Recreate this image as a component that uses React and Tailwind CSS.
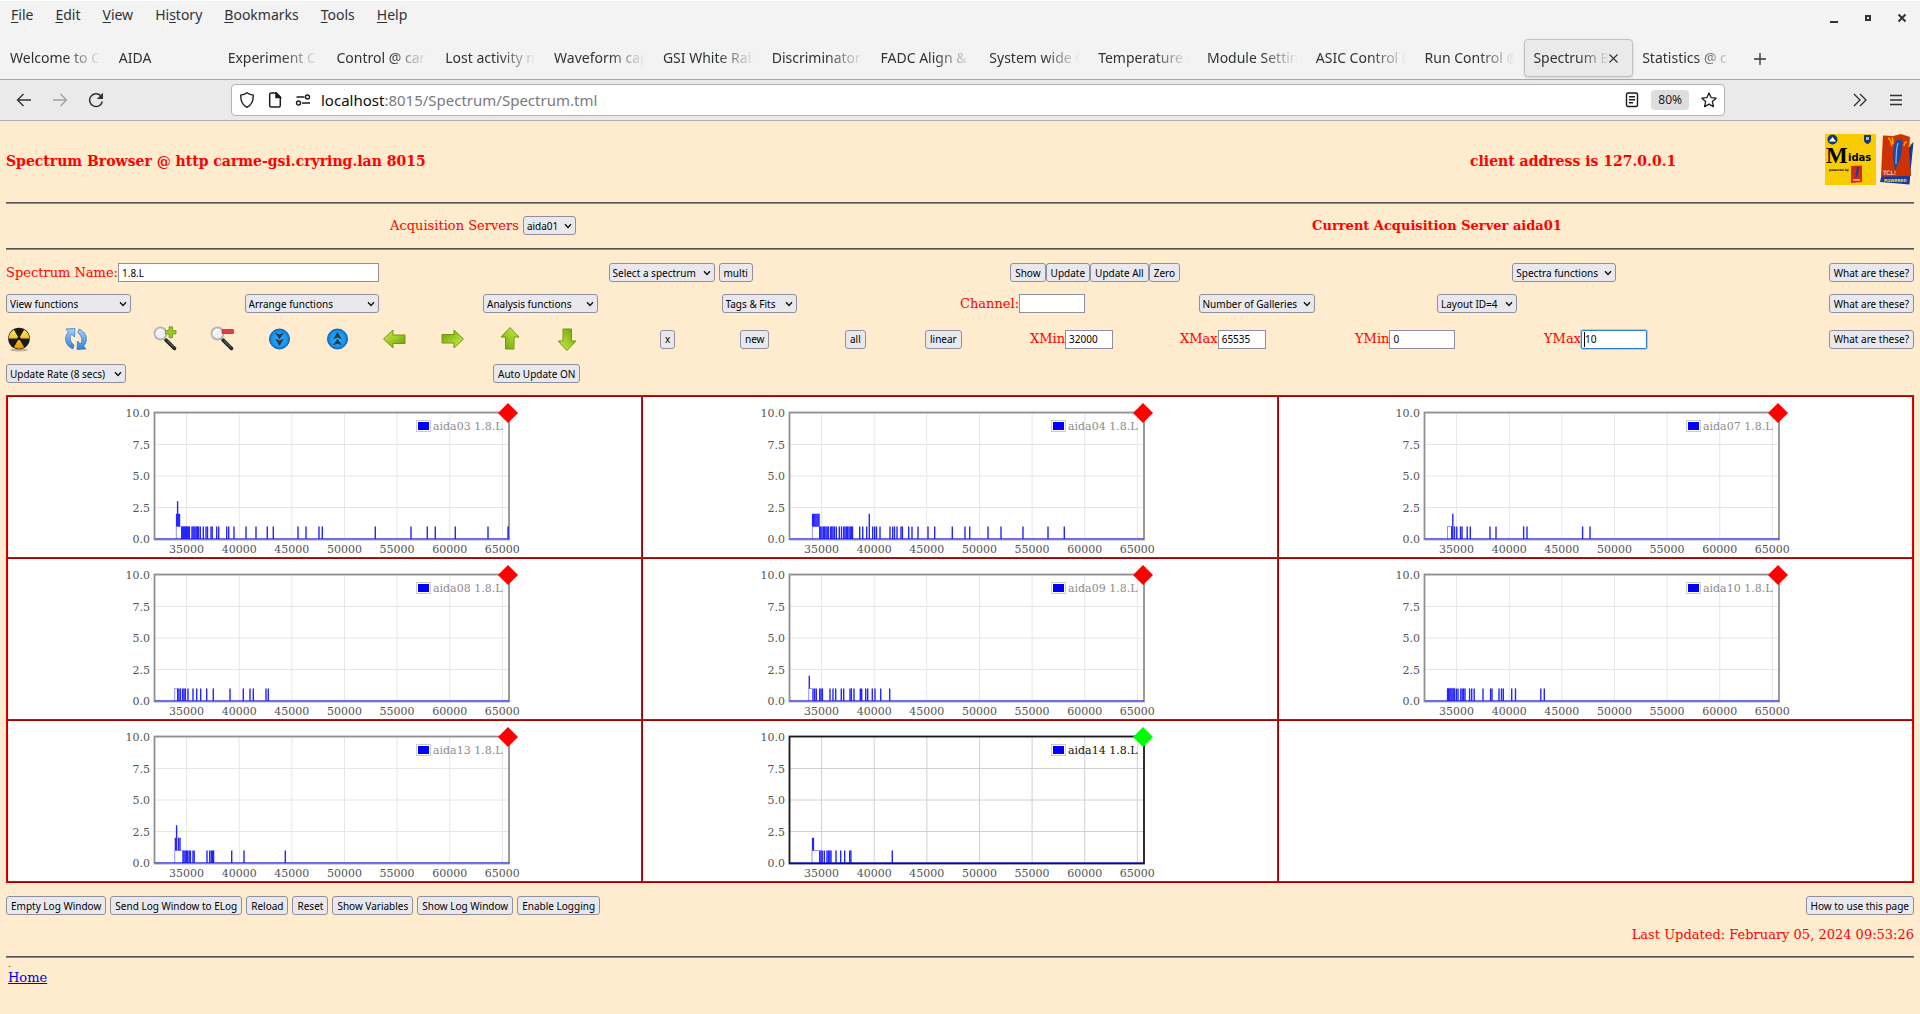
import React from 'react';

const menus = ['File', 'Edit', 'View', 'History', 'Bookmarks', 'Tools', 'Help'];
const menuKeys = { History: 2 };

const tabs = [
    'Welcome to C',
    'AIDA',
    'Experiment C',
    'Control @ car',
    'Lost activity n',
    'Waveform cap',
    'GSI White Rab',
    'Discriminator',
    'FADC Align &',
    'System wide C',
    'Temperature a',
    'Module Settin',
    'ASIC Control @',
    'Run Control @',
    'Spectrum B',
    'Statistics @ c',
];
const activeTab = 14;

// Every gallery: hits are bins with a single count, peaks and tall are [bin, count]
const galleries = [
    {
        name: 'aida03 1.8.L',
        plateau: [21.3, 26.3],
        peaks: [[21.6, 2], [22.6, 3], [23.6, 2], [24.5, 2]],
        hits: [
            26.7, 27.7, 28.6, 29.6, 30.5, 31.5, 32.4, 33.4, 34.4, 37, 38, 39, 40, 41.2, 42.4, 43.5, 45.3, 48.3, 51,
            52.5, 56, 57.2, 61.7, 63.7, 71.7, 73.7, 79, 91, 101, 112.3, 118.3, 143, 151, 164, 167.3, 220.3, 256,
            272.3, 280.3, 300.3, 333, 353,
        ],
    },
    {
        name: 'aida04 1.8.L',
        plateau: [22.3, 29.3],
        peaks: [[22.6, 2], [23.7, 2], [24.8, 2], [25.9, 2], [27, 2], [28.1, 2], [29, 2]],
        hits: [
            29.7, 30.8, 32, 33.5, 34.6, 36, 37.2, 38.5, 40.7, 41.8, 43, 44.4, 46.3, 49.3, 51.5, 53.7, 55, 56.3, 57.5,
            59, 60.2, 61.3, 62.5, 69.7, 72.7, 76.7, 82.7, 84.7, 86.5, 90, 100, 102.7, 104.5, 107, 111, 112.4, 118.7,
            122, 128, 138, 144.7, 162.3, 175, 179.7, 198, 211, 233, 258, 274.3,
        ],
        tall: [[79.3, 2]],
    },
    {
        name: 'aida07 1.8.L',
        plateau: [22.5, 26.5],
        hits: [26.7, 29.5, 31.8, 35.5, 37, 42.2, 45.3, 65, 71, 98.6, 102, 157.6, 165],
        tall: [[27.8, 2]],
    },
    {
        name: 'aida08 1.8.L',
        plateau: [19.7, 22.3],
        hits: [
            22.7, 23.9, 25.5, 27.7, 29, 30.3, 33, 38, 41.7, 45.7, 51.7, 58.3, 75, 88.3, 95, 98.3, 111, 113.3,
        ],
    },
    {
        name: 'aida09 1.8.L',
        plateau: [18.7, 22.3],
        peaks: [[19.3, 2]],
        hits: [
            23, 24.7, 26.3, 29.7, 31, 32.4, 40, 43, 45.7, 51.3, 53.7, 60, 61.4, 64, 70.3, 71.7, 75.7, 77.7, 82.3, 85,
            90.7, 99.7,
        ],
    },
    {
        name: 'aida10 1.8.L',
        plateau: [22.5, 29.5],
        hits: [
            22.6, 23.7, 24.8, 25.9, 27, 28.2, 29.4, 31.3, 33, 35.8, 37.2, 38.6, 40, 44.6, 46.7, 49.2, 58, 65.6, 67,
            74, 76.5, 78.3, 86.7, 90.5, 115.8, 119.3,
        ],
    },
    {
        name: 'aida13 1.8.L',
        plateau: [19.7, 27.3],
        peaks: [[20.4, 2], [21.6, 3], [23.6, 2], [25, 2]],
        hits: [
            28, 29, 30.2, 31.4, 32.7, 34.2, 35.4, 38, 39.2, 52, 54.7, 56.3, 57.5, 58.6, 76.7, 89, 130.3,
        ],
    },
    {
        name: 'aida14 1.8.L',
        active: true,
        plateau: [22, 29],
        peaks: [[22.6, 2], [23.4, 2]],
        hits: [29.7, 31, 32.2, 34.3, 37, 38.4, 39.8, 41, 46, 50.7, 54.7, 59.7, 60.9, 102.3],
    },
];

const field =
    'h-[19px] border border-[#8f8f9d] bg-white pl-[3px] font-[Noto_Sans,sans-serif] text-[10px] text-black outline-none';

const Button = ({ children }) => (
    <button
        type="button"
        className="h-[19px] rounded-[3px] border border-[#8f8f9d] bg-[#e9e9ed] px-1 font-[Noto_Sans,sans-serif] text-[10px] leading-4 whitespace-nowrap text-black">
        {children}
    </button>
);

const Select = ({ label, className, id }) => (
    <span className={`relative inline-block ${className}`}>
        <select
            id={id}
            aria-label={id ? undefined : label}
            className="block h-[19px] w-full appearance-none rounded-[3px] border border-[#8f8f9d] bg-[#e9e9ed] pl-[3px] font-[Noto_Sans,sans-serif] text-[10px] leading-4 text-black">
            <option>{label}</option>
        </select>
        <svg
            className="pointer-events-none absolute top-[7px] right-1 h-[6px] w-[8px]"
            viewBox="0 0 8 6"
            fill="none"
            stroke="#111"
            strokeWidth="1.4">
            <path d="M1 1.2 4 4.4 7 1.2" />
        </svg>
    </span>
);

const Help = () => (
    <div className="text-right">
        <Button>What are these?</Button>
    </div>
);

const LabelledInput = ({ id, label, value, className }) => (
    <div className="flex items-center">
        <label htmlFor={id}>{label}</label>
        <input id={id} defaultValue={value} className={`${field} ${className}`} />
    </div>
);

const Rule = ({ className = '' }) => (
    <hr className={`h-[2px] border-t border-b border-t-[#555] border-b-[#8a8a86] ${className}`} />
);

const MenuBar = () => (
    <div className="flex h-[39px] items-start justify-between border-t border-white px-[11px]">
        <div className="flex gap-[22px] pt-[4px] text-[14px] leading-5">
            {menus.map((menu) => {
                const at = menuKeys[menu] || 0;
                return (
                    <button type="button" key={menu}>
                        {menu.slice(0, at)}
                        <span className="underline underline-offset-2">{menu[at]}</span>
                        {menu.slice(at + 1)}
                    </button>
                );
            })}
        </div>
        <div className="flex gap-6 pt-[12px] text-[#2e3436]">
            <button type="button" aria-label="Minimise">
                <svg width="10" height="10" viewBox="0 0 10 10">
                    <path d="M1 8h8v2H1z" fill="currentColor" />
                </svg>
            </button>
            <button type="button" aria-label="Maximise">
                <svg width="10" height="10" viewBox="0 0 10 10">
                    <rect x="3" y="3" width="4" height="4" fill="none" stroke="currentColor" strokeWidth="2" />
                </svg>
            </button>
            <button type="button" aria-label="Close" className="pr-[2px]">
                <svg width="10" height="10" viewBox="0 0 10 10" stroke="currentColor" strokeWidth="2">
                    <path d="m1.5 1.5 7 7m0-7-7 7" />
                </svg>
            </button>
        </div>
    </div>
);

const TabBar = () => (
    <div className="flex h-[41px] items-start border-b border-[#a9a9ab] pl-px text-[14px] leading-5">
        {tabs.map((tab, i) => (
            <div
                key={tab}
                className={
                    i === activeTab
                        ? 'flex h-[38px] min-w-0 flex-1 items-center rounded border border-[#c0c0c0] bg-[#eaeaea] px-2 shadow-sm'
                        : 'flex h-[38px] min-w-0 flex-1 items-center border border-transparent px-2'
                }>
                <span className="min-w-0 flex-1 overflow-hidden whitespace-nowrap [mask-image:linear-gradient(to_right,black_60%,transparent_100%)]">
                    {tab}
                </span>
                {i === activeTab && (
                    <button type="button" aria-label="Close tab" className="pr-[6px]">
                        <svg width="9" height="9" viewBox="0 0 9 9" stroke="#2e3436" strokeWidth="1.1">
                            <path d="m.5.5 8 8m0-8-8 8" />
                        </svg>
                    </button>
                )}
            </div>
        ))}
        <div className="flex h-[39px] w-[178px] items-center pl-3">
            <button type="button" aria-label="New tab">
                <svg width="12" height="12" viewBox="0 0 12 12" stroke="#2e3436" strokeWidth="1.3">
                    <path d="M6 0v12M0 6h12" />
                </svg>
            </button>
        </div>
    </div>
);

const Toolbar = () => (
    <div className="flex h-[41px] items-center border-b border-[#b0b0b0] bg-[#eaeaea] px-4 text-[#2e3436]">
        <div className="flex w-[215px] shrink-0 items-center gap-5">
            <button type="button" aria-label="Back">
                <svg width="16" height="16" viewBox="0 0 16 16" fill="none" stroke="currentColor" strokeWidth="1.4">
                    <path d="M15 8H1.5M7.5 2l-6 6 6 6" />
                </svg>
            </button>
            <button type="button" aria-label="Forward" className="text-[#a2a3a4]">
                <svg width="16" height="16" viewBox="0 0 16 16" fill="none" stroke="currentColor" strokeWidth="1.4">
                    <path d="M1 8h13.5M8.5 2l6 6-6 6" />
                </svg>
            </button>
            <button type="button" aria-label="Reload">
                <svg width="16" height="16" viewBox="0 0 16 16" fill="none" stroke="currentColor" strokeWidth="1.5">
                    <path d="M14.3 9.500A6.400 6.400 0 1 1 12.8 3.8" />
                    <path d="M15 .8v6.200H8.800z" fill="currentColor" stroke="none" />
                </svg>
            </button>
        </div>
        <div className="flex h-8 flex-1 items-center rounded border border-[#b3b3b3] bg-white pr-[7px] pl-[7px] text-[#1c1b22]">
            <svg width="16" height="16" viewBox="0 0 16 16" fill="none" stroke="currentColor" strokeWidth="1.4">
                <path d="M8 .8c2 1.500 4.200 2.200 6.200 2.300.300 5.500-1.400 9.700-6.200 12.200C3.200 12.800 1.500 8.600 1.800 3.100 3.800 3 6 2.300 8 .8z" />
            </svg>
            <svg
                className="ml-3"
                width="16"
                height="16"
                viewBox="0 0 16 16"
                fill="none"
                stroke="currentColor"
                strokeWidth="1.5">
                <path d="M4.200 1h5.100L13.300 5v8.500a1.500 1.500 0 0 1-1.500 1.500H4.200a1.500 1.500 0 0 1-1.500-1.500v-11A1.500 1.500 0 0 1 4.200 1z" />
                <path d="M9 1v4.500h4.300z" fill="currentColor" />
            </svg>
            <svg
                className="ml-3"
                width="16"
                height="16"
                viewBox="0 0 16 16"
                fill="none"
                stroke="currentColor"
                strokeWidth="1.4">
                <path d="M1.500 5h8M7 11h8" />
                <circle cx="12.5" cy="5" r="2" />
                <circle cx="3.5" cy="11" r="2" />
            </svg>
            <span
                role="textbox"
                aria-label="Address"
                tabIndex={0}
                className="ml-[10px] flex-1 text-[15px] leading-5 text-[#7a7a7e]">
                <span className="text-[#0c0c0d]">localhost</span>:8015/Spectrum/Spectrum.tml
            </span>
            <svg width="14" height="16" viewBox="0 0 14 16" fill="none" stroke="currentColor" strokeWidth="1.4">
                <rect x="1.5" y="1" width="11" height="13.5" rx="1.5" />
                <path d="M4 4.700h6M4 7.700h6M4 10.700h4" />
            </svg>
            <span className="mx-3 h-5 rounded bg-[#dedede] px-[7px] text-[12px] leading-5">80%</span>
            <svg width="16" height="16" viewBox="0 0 16 16" fill="none" stroke="currentColor" strokeWidth="1.3">
                <path
                    d="m8 1 2.100 4.600 5 .600-3.700 3.400 1 5L8 12.100l-4.400 2.500 1-5L.9 6.200l5-.600z"
                    strokeLinejoin="round"
                />
            </svg>
        </div>
        <div className="flex w-[179px] items-center justify-end gap-[21px]">
            <button type="button" aria-label="More tools">
                <svg width="16" height="14" viewBox="0 0 16 14" fill="none" stroke="currentColor" strokeWidth="1.4">
                    <path d="m2 1 6 6-6 6M8 1l6 6-6 6" />
                </svg>
            </button>
            <button type="button" aria-label="Menu" className="pr-px">
                <svg width="14" height="12" viewBox="0 0 14 12" stroke="currentColor" strokeWidth="1.4">
                    <path d="M1 1.500h12M1 6h12M1 10.500h12" />
                </svg>
            </button>
        </div>
    </div>
);

const Logos = () => (
    <div className="flex justify-end gap-1">
        <svg width="51" height="51" viewBox="0 0 51 51">
            <rect width="51" height="51" fill="#f8cc00" />
            <circle cx="7.5" cy="5.5" r="5" fill="#0c3c78" />
            <path d="M4 7.500h7L7.500 3z" fill="#fff" />
            <path d="M39 1h7v5c0 2-2 3.500-3.500 4C41 9.500 39 8 39 6z" fill="#16356f" />
            <path d="M41 3h3v3h-3z" fill="#aab8d8" />
            <text x="1" y="29" fontFamily="Liberation Serif, serif" fontWeight="bold" fontSize="23">
                M
            </text>
            <text x="23" y="27" fontFamily="DejaVu Sans, sans-serif" fontWeight="bold" fontSize="10">
                idas
            </text>
            <text x="4" y="37" fontFamily="DejaVu Sans, sans-serif" fontWeight="bold" fontSize="3">
                powered by
            </text>
            <path d="m26 32 11-.5V48l-11 1z" fill="#d42a10" />
            <path d="M32 33c2-1 3 1 2 2l-1.500 7-2 2 .5-6z" fill="#1c3f94" />
            <path d="M28 46h7" stroke="#f3b8a0" strokeWidth="1.5" />
        </svg>
        <svg width="34" height="51" viewBox="0 0 34 51">
            <path d="m33.500 8-3 30-1 12.500L0 48l2-9z" fill="#123c9c" />
            <path d="M3 1.500 13 2l8-2 9 3-1 14 2 25-30 .5L2 20z" fill="#cd3300" />
            <path
                d="M8 4c3 1 3 4 4 8M12 3c1 2 1 4 1 7M24 12c0-3 1-4 3-4M29 13c0-1 1-2 2-3"
                stroke="#f2a800"
                strokeWidth="1.5"
                fill="none"
            />
            <path d="M17 6c5-2 7 2 5 6 0 8-2 15-5 19 0 3-1 4-2 6l-1-7c-2-8-1-20 3-24z" fill="#174aa8" />
            <path d="M18 9c-2 6-2 13-2 21" stroke="#8fb4ea" strokeWidth="1.2" fill="none" />
            <text x="3" y="41" fill="#fff" fontFamily="DejaVu Sans, sans-serif" fontSize="6">
                TCL!
            </text>
            <text x="4" y="48" fill="#f4e800" fontFamily="DejaVu Sans, sans-serif" fontWeight="bold" fontSize="4">
                POWERED
            </text>
        </svg>
    </div>
);

const IconButton = ({ label, children }) => (
    <div>
        <button type="button" aria-label={label} className="block">
            <svg width="26" height="26" viewBox="0 0 26 26">
                {children}
            </svg>
        </button>
    </div>
);

const ArrowIcon = ({ label, turn }) => (
    <IconButton label={label}>
        <path
            d="M1.500 13 11 4v5h12v8.500H11V22z"
            transform={`rotate(${turn} 13 13)`}
            fill="url(#green)"
            stroke="#6d9a0c"
            strokeWidth="1"
            strokeLinejoin="round"
        />
    </IconButton>
);

const Gradients = () => (
    <svg className="absolute h-0 w-0" aria-hidden="true">
        <defs>
            <linearGradient id="green" x1="0" y1="0" x2="1" y2="1">
                <stop offset="0" stopColor="#d2ea5a" />
                <stop offset="0.5" stopColor="#9fcb24" />
                <stop offset="1" stopColor="#5f9a08" />
            </linearGradient>
            <radialGradient id="disc">
                <stop offset="0" stopColor="#2fb4ff" />
                <stop offset="0.75" stopColor="#1795ee" />
                <stop offset="1" stopColor="#0b6cc4" />
            </radialGradient>
            <linearGradient id="sky" x1="0" y1="0" x2="0" y2="1">
                <stop offset="0" stopColor="#a9d2fa" />
                <stop offset="1" stopColor="#2f7fd6" />
            </linearGradient>
            <linearGradient id="amber" x1="0" y1="0" x2="0" y2="1">
                <stop offset="0" stopColor="#ffe25a" />
                <stop offset="1" stopColor="#e89a00" />
            </linearGradient>
        </defs>
    </svg>
);

const Magnifier = () => (
    <>
        <path d="m13 14 8.500 8.500" stroke="#222" strokeWidth="3.5" strokeLinecap="round" />
        <path d="m14 14.500 7 7" stroke="#999" strokeWidth="0.8" />
        <circle cx="7.5" cy="7.5" r="6" fill="#f1f1f4" stroke="#b5b5b8" strokeWidth="1.8" />
        <path d="M4 7.500a4 4 0 0 1 4-4" stroke="#fff" strokeWidth="1.5" fill="none" />
    </>
);

const IconRow = () => (
    <div className="mt-[13px] grid grid-cols-[57fr_90fr_57fr_57fr_58fr_57fr_57fr_58fr_57fr_106fr_80fr_105fr_80fr_105fr_150fr_175fr_189fr_370fr] items-center">
        <IconButton label="Reset spectra">
            <ellipse cx="13" cy="24" rx="9" ry="1.5" fill="#000" opacity="0.25" />
            <circle cx="13" cy="12.5" r="10.8" fill="#1b1b16" />
            <path
                d="M13 12.500 2.800 12.500a10.200 10.200 0 0 1 5.100-8.800zM13 12.500l5.100-8.800a10.200 10.200 0 0 1 5.100 8.800zM13 12.500l5.100 8.800a10.200 10.200 0 0 1-10.200 0z"
                fill="url(#amber)"
            />
            <circle cx="13" cy="12.5" r="1.8" fill="#1b1b16" />
        </IconButton>
        <IconButton label="Refresh">
            <g fill="url(#sky)" stroke="#2b6fc0" strokeWidth="0.7" strokeLinejoin="round">
                <path d="M10 23C2 20 .5 11 5.500 6L3 3l9-.5L11.500 11 8.500 8C6 11.500 7 16 11 19z" />
                <path d="M16 3c8 3 9.500 12 4.500 17l2.500 3-9 .5.500-8.500 3 3C20 14.500 19 10 15 7z" />
            </g>
        </IconButton>
        <IconButton label="Zoom in">
            <Magnifier />
            <path
                d="M16 .8h3.500v3.700H23V8h-3.500v3.700H16V8h-3.700V4.500H16z"
                fill="#9cc91c"
                stroke="#5f8f0a"
                strokeWidth="0.7"
            />
        </IconButton>
        <IconButton label="Zoom out">
            <Magnifier />
            <rect x="12" y="3.5" width="11.5" height="4" rx="0.5" fill="#e0404c" stroke="#b02030" strokeWidth="0.7" />
        </IconButton>
        <IconButton label="Scale down">
            <circle cx="12.5" cy="13" r="10" fill="url(#disc)" stroke="#0d66b8" />
            <path d="m8 6.500 4.500 2L17 6.500l-4.500 7zM8 12.500l4.500 2 4.500-2-4.500 7.500z" fill="#2f3640" />
        </IconButton>
        <IconButton label="Scale up">
            <circle cx="12.5" cy="13" r="10" fill="url(#disc)" stroke="#0d66b8" />
            <path d="m8 19.500 4.500-2 4.500 2-4.500-7zM8 13.500l4.500-2 4.500 2L12.500 6z" fill="#2f3640" />
        </IconButton>
        <ArrowIcon label="Shift left" turn={0} />
        <ArrowIcon label="Shift right" turn={180} />
        <ArrowIcon label="Shift up" turn={90} />
        <ArrowIcon label="Shift down" turn={270} />
        <div>
            <Button>x</Button>
        </div>
        <div>
            <Button>new</Button>
        </div>
        <div>
            <Button>all</Button>
        </div>
        <div>
            <Button>linear</Button>
        </div>
        <LabelledInput id="xmin" label="XMin" value="32000" className="w-12" />
        <LabelledInput id="xmax" label="XMax" value="65535" className="w-12" />
        <LabelledInput id="ymin" label="YMin" value="0" className="w-[66px]" />
        <div className="flex items-center justify-between">
            <div className="flex items-center">
                <label htmlFor="ymax">YMax</label>
                <span className="relative">
                    <input
                        id="ymax"
                        defaultValue="10"
                        className="block h-[19px] w-[66px] rounded-xs border border-[#2f7fd0] bg-white pl-[3px] font-[Noto_Sans,sans-serif] text-[10px] text-black ring-1 ring-[#a9cdea] outline-none"
                    />
                    <span className="absolute top-[2px] left-[3px] h-[15px] w-px bg-black" />
                </span>
            </div>
            <Help />
        </div>
    </div>
);

// Plot area spans 32000..65535 across 353px and 0..10 down 126px
const left = 40;
const bottom = 142;
const step = 12.6;

const Gallery = ({ name, plateau, peaks = [], hits, tall = [], active }) => {
    const frame = active ? '#1a1a1a' : '#909090';
    const grid = active ? '#d0d0d0' : '#e6e6e6';
    const xOf = (channel) => left + (channel - 32000) / 95;
    const floor = bottom - step;

    return (
        <svg width="420" height="160" viewBox="0 0 420 160" fontFamily="DejaVu Serif, serif" fontSize="11">
            {[35000, 40000, 45000, 50000, 55000, 60000, 65000].map((channel) => (
                <g key={channel}>
                    <path d={`M${xOf(channel)} 16V142`} stroke={grid} />
                    <text x={xOf(channel)} y="156" textAnchor="middle" fill="#545454">
                        {channel}
                    </text>
                </g>
            ))}
            {[0, 2.5, 5, 7.5, 10].map((count) => (
                <g key={count}>
                    <path d={`M40 ${bottom - count * step}H394`} stroke={grid} />
                    <text x="35" y={bottom + 4 - count * step} textAnchor="end" fill="#545454">
                        {count.toFixed(1)}
                    </text>
                </g>
            ))}
            <rect x="39.5" y="15.5" width="354.5" height="127" fill="none" stroke={frame} strokeWidth="1.8" />
            <g stroke="#0000ff" fill="none" opacity="0.85">
                <path d="M40 141.700H394" strokeWidth="1" opacity="0.7" />
                <path
                    d={`M${plateau[0]} 0V${-step}H${plateau[1]}`}
                    transform={`translate(${left} ${bottom})`}
                    strokeWidth="1"
                    opacity="0.5"
                />
                {hits.map((bin) => (
                    <path key={bin} d={`M${left + bin} ${bottom}v${-step}`} strokeWidth="1.4" />
                ))}
                {tall.map(([bin, count]) => (
                    <path key={bin} d={`M${left + bin} ${bottom}v${-step * count}`} strokeWidth="1.4" />
                ))}
                {peaks.map(([bin, count]) => (
                    <path key={bin} d={`M${left + bin} ${floor}v${-step * (count - 1)}`} strokeWidth="1.4" />
                ))}
            </g>
            <rect x="301.5" y="23.5" width="14" height="11" fill="#fff" stroke="#ccc" />
            <rect x="303" y="25" width="11" height="8" fill="#0000ff" />
            <text x="318" y="33" fill={active ? '#111' : '#8c8c8c'}>
                {name}
            </text>
            <path d="m393 6 10 10-10 10-10-10z" fill={active ? '#00ff00' : '#ff0000'} />
        </svg>
    );
};

const App = () => {
    return (
        <div className="flex min-h-screen flex-col bg-[#ffebcd]">
            <div className="bg-[#f3f3f3] font-[Noto_Sans,sans-serif] text-[#2e3436]">
                <MenuBar />
                <TabBar />
                <Toolbar />
            </div>

            <div className="px-[6px] font-[DejaVu_Serif,serif] text-[13px] leading-[18px] text-[#ff0000]">
                <Gradients />
                <div className="grid grid-cols-[1464fr_355fr_89fr] items-center pt-[13px]">
                    <h1 className="pt-[3px] text-[14px] font-bold">
                        Spectrum Browser @ http carme-gsi.cryring.lan 8015
                    </h1>
                    <h2 className="pt-[3px] text-[14px] font-bold whitespace-nowrap">client address is 127.0.0.1</h2>
                    <Logos />
                </div>

                <Rule className="mt-[17px]" />

                <div className="mt-3 grid grid-cols-2 items-center justify-items-center">
                    <div className="flex items-center gap-1">
                        <label htmlFor="server">Acquisition Servers</label>
                        <Select id="server" label="aida01" className="w-[53px]" />
                    </div>
                    <h2 className="font-bold">Current Acquisition Server aida01</h2>
                </div>

                <Rule className="mt-[13px]" />

                <div className="mt-[13px] grid grid-cols-[6fr_4fr_5fr_4fr] items-center">
                    <LabelledInput id="spectrum" label="Spectrum Name:" value="1.8.L" className="w-[261px]" />
                    <div className="flex gap-1">
                        <Select label="Select a spectrum" className="w-[106px]" />
                        <Button>multi</Button>
                    </div>
                    <div className="flex">
                        <Button>Show</Button>
                        <Button>Update</Button>
                        <Button>Update All</Button>
                        <Button>Zero</Button>
                    </div>
                    <div className="flex justify-between">
                        <Select label="Spectra functions" className="w-[104px]" />
                        <Help />
                    </div>
                </div>

                <div className="mt-3 grid grid-cols-8 items-center">
                    <Select label="View functions" className="w-[125px]" />
                    <Select label="Arrange functions" className="w-[134px]" />
                    <Select label="Analysis functions" className="w-[115px]" />
                    <Select label="Tags & Fits" className="w-[75px]" />
                    <LabelledInput id="channel" label="Channel:" value="" className="w-[66px]" />
                    <Select label="Number of Galleries" className="w-[116px]" />
                    <Select label="Layout ID=4" className="w-[80px]" />
                    <Help />
                </div>

                <IconRow />

                <div className="mt-3 grid grid-cols-[487fr_1421fr] items-center">
                    <Select label="Update Rate (8 secs)" className="w-[120px]" />
                    <div className="flex">
                        <Button>Auto Update ON</Button>
                    </div>
                </div>

                <div className="mt-3 grid grid-cols-3 border border-t-[#f00000] border-r-[#a80000] border-b-[#a80000] border-l-[#f00000] bg-white">
                    {galleries.map((gallery) => (
                        <div
                            key={gallery.name}
                            className="flex justify-center border border-t-[#a80000] border-r-[#f00000] border-b-[#f00000] border-l-[#a80000]">
                            <Gallery {...gallery} />
                        </div>
                    ))}
                    <div className="border border-t-[#a80000] border-r-[#f00000] border-b-[#f00000] border-l-[#a80000]" />
                </div>

                <div className="mt-[13px] flex gap-1">
                    <Button>Empty Log Window</Button>
                    <Button>Send Log Window to ELog</Button>
                    <Button>Reload</Button>
                    <Button>Reset</Button>
                    <Button>Show Variables</Button>
                    <Button>Show Log Window</Button>
                    <Button>Enable Logging</Button>
                    <div className="flex flex-1 justify-end">
                        <Button>How to use this page</Button>
                    </div>
                </div>

                <p className="mt-[11px] text-right">Last Updated: February 05, 2024 09:53:26</p>

                <Rule className="mt-3" />

                <div className="px-[2px] text-[#333]">
                    <p className="text-[10px] leading-[11px]">.</p>
                    <a href="#home" className="text-[#0000ee] underline">
                        Home
                    </a>
                </div>
            </div>
        </div>
    );
};

export default App;
